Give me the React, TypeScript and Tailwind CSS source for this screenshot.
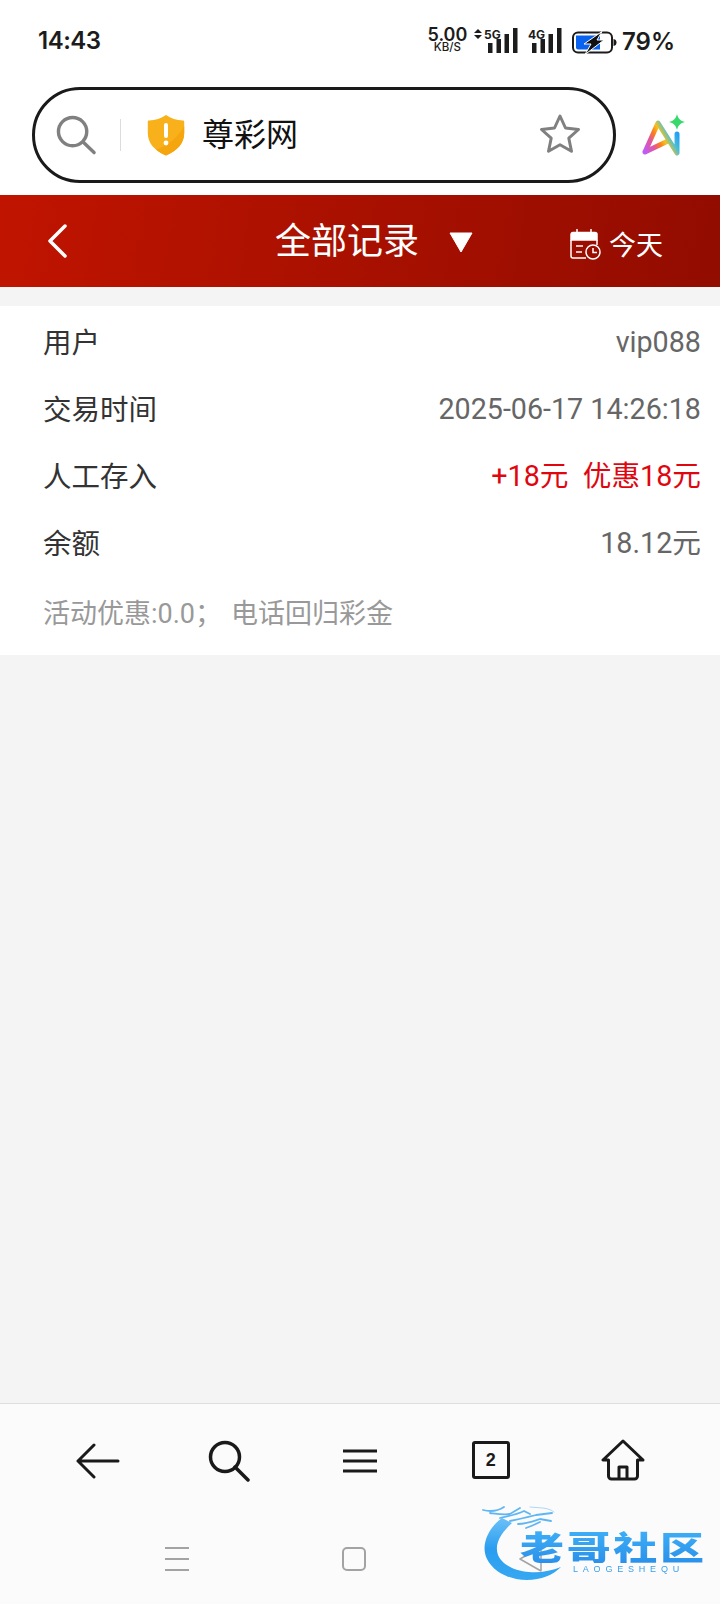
const cjk = "font-['Roboto','Noto_Sans_CJK_SC',sans-serif]";

function SignalBars({ label }: { label: string }) {
  return (
    <svg width="30" height="26" viewBox="0 0 30 26" className="overflow-visible">
      <rect x="0" y="15" width="4.500" height="10" fill="#1c1c1c" />
      <rect x="8.500" y="11" width="4.500" height="14" fill="#1c1c1c" />
      <rect x="16.500" y="6" width="4.500" height="19" fill="#1c1c1c" />
      <rect x="25" y="0" width="4.500" height="25" fill="#1c1c1c" />
      <text x="-4" y="11" fontSize="12" fontWeight="700" fontFamily="Inter, sans-serif" fill="#1c1c1c">{label}</text>
    </svg>
  );
}

function StatusBar() {
  return (
    <div className="h-[87px] flex items-start justify-between pl-[38px] pr-[45px] pt-[27px] font-['Inter',sans-serif] text-[#1c1c1c]">
      <span className="text-[24px] leading-[28px] font-semibold tracking-[-0.5px]">14:43</span>
      <div className="flex items-start">
        <div className="flex flex-col items-center w-[39px] mt-[1px]">
          <span className="text-[18px] leading-[14px] font-semibold">5.00</span>
          <span className="mt-[1px] text-[11.500px] leading-[9px] font-medium">KB/S</span>
        </div>
        <svg width="8" height="10" viewBox="0 0 8 10" className="ml-[7px] mt-[2px]">
          <path d="M4 0 8 4H0zM0 6h8L4 10z" fill="#1c1c1c" />
        </svg>
        <div className="ml-[6px] mt-[1px]"><SignalBars label="5G" /></div>
        <div className="ml-[14px] mt-[1px]"><SignalBars label="4G" /></div>
        <svg width="46" height="24" viewBox="0 0 46 24" className="ml-[10px] mt-[4px]">
          <rect x="1" y="1.500" width="39" height="20" rx="5" fill="#fff" stroke="#1c1c1c" strokeWidth="2" />
          <path d="M4 4.500h24v14H6a2 2 0 0 1-2-2z" fill="#0a63f0" />
          <path d="M41.500 8c2 .3 3 1.500 3 3.500s-1 3.200-3 3.500z" fill="#1c1c1c" />
          <path d="M30 .5 12 13h7l-6 10.500L32 9h-7l5-8.500z" fill="#111" stroke="#fff" strokeWidth="1" />
        </svg>
        <span className="ml-[4px] mt-[1px] text-[24px] leading-[28px] font-semibold">79%</span>
      </div>
    </div>
  );
}

function ShieldIcon() {
  return (
    <svg width="38" height="42" viewBox="0 0 38 42">
      <path d="M19 1c5 3.500 10.500 5.200 17 5.500.8 0 1.200.5 1.200 1.200V19c0 10-6.500 17.500-18.200 22.500C7.300 36.500.8 29 .8 19V7.700c0-.7.4-1.200 1.200-1.200C8.500 6.200 14 4.500 19 1z" fill="#f9b11b" />
      <path d="M37.200 12V19c0 10-6.500 17.500-18.200 22.500-4-1.700-7.300-3.700-10-6C22 31 31 23 37.200 12z" fill="#f5a50e" />
      <rect x="17" y="9" width="4" height="15" rx="2" fill="#fff" />
      <circle cx="19" cy="29" r="2.400" fill="#fff" />
    </svg>
  );
}

function AiLogo() {
  return (
    <svg width="44" height="44" viewBox="0 0 44 44">
      <defs>
        <linearGradient id="aiStroke" gradientUnits="userSpaceOnUse" x1="3" y1="38" x2="36" y2="20">
          <stop offset="0" stopColor="#c05cf5" />
          <stop offset="0.28" stopColor="#e2569a" />
          <stop offset="0.45" stopColor="#fb7d1c" />
          <stop offset="0.6" stopColor="#f4c21f" />
          <stop offset="0.78" stopColor="#4fc0d0" />
          <stop offset="1" stopColor="#1f9efb" />
        </linearGradient>
      </defs>
      <path d="M3 38 16 9l19 30V20M3 38l23-11" fill="none" stroke="url(#aiStroke)" strokeWidth="5" strokeLinecap="round" strokeLinejoin="round" />
      <path d="M35 0c1 4.500 3.500 7 8 8-4.500 1-7 3.500-8 8-1-4.500-3.500-7-8-8 4.500-1 7-3.500 8-8z" fill="#37d96b" />
    </svg>
  );
}

function AddressBar() {
  return (
    <div className="h-[108px] flex items-start pl-[32px]">
      <div className="w-[584px] h-[96px] rounded-full border-[3px] border-[#1a1a1a] flex items-center pl-[21px] pr-[32px]">
        <svg width="41" height="41" viewBox="0 0 42 42" fill="none" stroke="#808080" strokeWidth="3.500" strokeLinecap="round">
          <circle cx="17" cy="17" r="14.500" />
          <path d="m28 28 11 10.500" />
        </svg>
        <div className="w-px h-[32px] bg-[#dcdcdc] ml-[23px]" />
        <div className="ml-[26px]"><ShieldIcon /></div>
        <span className={`ml-[17px] text-[32px] leading-none text-[#111] ${cjk}`}>尊彩网</span>
        <svg width="42" height="42" viewBox="0 0 42 42" className="ml-auto -mt-[2px]" fill="none" stroke="#808080" strokeWidth="3" strokeLinejoin="round">
          <path d="m21 3 5.500 12 13 1.500-9.700 8.700 2.700 13L21 31.700 9.500 38.200l2.700-13-9.700-8.700 13-1.500z" />
        </svg>
      </div>
      <div className="ml-[26px] mt-[27px]"><AiLogo /></div>
    </div>
  );
}

function PageHeader() {
  return (
    <div className="h-[92px] flex items-center text-white bg-[linear-gradient(100deg,#c01400,#a81000_50%,#920c00)]">
      <svg width="20" height="34" viewBox="0 0 20 34" className="ml-[47px]" fill="none" stroke="#fff" strokeWidth="3.500" strokeLinecap="round" strokeLinejoin="round">
        <path d="M18 2 3 17l15 15" />
      </svg>
      <span className={`ml-[208px] mt-[2px] text-[36px] leading-none ${cjk}`}>全部记录</span>
      <svg width="24" height="20" viewBox="0 0 24 20" className="ml-[30px] mt-[2px]">
        <path d="M1 1h22L12 20z" fill="#fff" stroke="#fff" strokeWidth="1" strokeLinejoin="round" />
      </svg>
      <svg width="31" height="31" viewBox="0 0 31 31" className="ml-[97px] mt-[6px]" fill="none" stroke="#fff" strokeWidth="1.500">
        <path d="M1 11V5.500a2 2 0 0 1 2-2h22a2 2 0 0 1 2 2V11z" fill="#fff" />
        <path d="M7 .5v4M21 .5v4" strokeLinecap="round" />
        <path d="M1 11v16a2 2 0 0 0 2 2h13M27 11v5" />
        <path d="M6 17h7M6 23h6" />
        <circle cx="23" cy="23" r="7" />
        <path d="M23 19v4.500h4" />
      </svg>
      <span className={`ml-[8px] mt-[10px] text-[27px] leading-none ${cjk}`}>今天</span>
    </div>
  );
}

const rows = [
  { label: "用户", value: "vip088", tone: "text-[#666]" },
  { label: "交易时间", value: "2025-06-17 14:26:18", tone: "text-[#666]" },
  { label: "人工存入", value: "+18元  优惠18元", tone: "text-[#e0060f]" },
  { label: "余额", value: "18.12元", tone: "text-[#666]" },
];

function RecordCard() {
  return (
    <div className={`mt-[19px] bg-white pt-[3px] pb-[6px] pl-[43px] pr-[19px] text-[28.500px] ${cjk}`}>
      {rows.map((row) => (
        <div key={row.label} className="h-[67px] flex items-center justify-between">
          <span className="mt-[3px] text-[#333]">{row.label}</span>
          <span className={`${row.tone} text-[28.700px] whitespace-pre`}>{row.value}</span>
        </div>
      ))}
      <div className="h-[72px] pt-[2px] flex items-center text-[27px] text-[#999] whitespace-pre">
        活动优惠:0.0；<span className="ml-[9px]">电话回归彩金</span>
      </div>
    </div>
  );
}

function BrowserNav() {
  return (
    <div className="grid grid-cols-5 px-[33px] h-[112px] items-center justify-items-center pt-[1px]">
      <svg width="44" height="36" viewBox="0 0 44 36" fill="none" stroke="#1a1a1a" strokeWidth="3" strokeLinecap="round" strokeLinejoin="round">
        <path d="M42 18H2M18 2 2 18l16 16" />
      </svg>
      <svg width="42" height="42" viewBox="0 0 42 42" fill="none" stroke="#1a1a1a" strokeWidth="3.500" strokeLinecap="round">
        <circle cx="17" cy="17" r="14.500" />
        <path d="m27 27 13 13" />
      </svg>
      <svg width="34" height="24" viewBox="0 0 34 24" fill="none" stroke="#1a1a1a" strokeWidth="3">
        <path d="M0 2h34M0 12h34M0 22h34" />
      </svg>
      <div className="w-[38px] h-[38px] -mt-[2px] rounded-[3px] border-[3px] border-[#1a1a1a] flex items-center justify-center font-['Liberation_Sans',sans-serif] font-bold text-[18px] leading-none text-[#1a1a1a]">2</div>
      <svg width="44" height="42" viewBox="0 0 44 42" className="ml-[3px] -mt-[2px]" fill="none" stroke="#1a1a1a" strokeWidth="3" strokeLinejoin="round">
        <path d="M22 2 2 21h5.500v16a3 3 0 0 0 3 3h23a3 3 0 0 0 3-3V21H42z" />
        <path d="M18 40V28h8v12" />
      </svg>
    </div>
  );
}

function SystemNav() {
  return (
    <div className="grid grid-cols-3 w-[531px] ml-[88px] h-[88px] items-center justify-items-center pb-[3px]">
      <svg width="24" height="24" viewBox="0 0 24 24" fill="none" stroke="#a3a3a3" strokeWidth="2">
        <path d="M0 1h24M0 12h24M0 23h24" />
      </svg>
      <div className="w-[24px] h-[24px] rounded-[5px] border-2 border-[#a3a3a3]" />
      <svg width="24" height="26" viewBox="0 0 24 26" fill="none" stroke="#a3a3a3" strokeWidth="1.500" strokeLinejoin="round">
        <path d="M22 1 1 13l21 12z" />
      </svg>
    </div>
  );
}

// community badge that floats over the bottom-right corner
function CommunityBadge() {
  return (
    <div className="absolute left-[482px] top-[100px] w-[222px] h-[78px] blur-[0.6px]">
      <svg width="90" height="78" viewBox="0 0 90 78" className="absolute left-0 top-0 overflow-visible">
        <defs>
          <linearGradient id="dragon" x1="0" y1="0" x2="0" y2="1">
            <stop offset="0" stopColor="#6cc1f7" />
            <stop offset="0.5" stopColor="#2a9df0" />
            <stop offset="1" stopColor="#36a8f2" />
          </linearGradient>
        </defs>
        <path d="M20 14C4 26-1 43 5 55c7 14 24 21 40 21 14 0 26-5 34-13-10 4-21 6-32 5-13-1-26-6-31-17-4-11 3-22 14-32z" fill="url(#dragon)" />
        <g fill="none" stroke="#3aa5f2" strokeWidth="1.800" strokeLinecap="round" opacity="0.8">
          <path d="M1 6c8 2 15 1 21-3" />
          <path d="M8 9c8 1 14 2 20 1l10-6" />
          <path d="M18 14c8-2 16-3 24-7l6 3" />
          <path d="M28 17c10-2 18-4 26-6l16-2" />
          <path d="M36 20c8 0 16-3 22-5l11 2" />
          <path d="M44 24c6-2 10-4 14-6" />
          <path d="M48 3c8 1 18 0 24 5" strokeWidth="1" opacity="0.5" />
        </g>
      </svg>
      <div className="absolute left-[38px] top-[19px] w-[184px] flex justify-between scale-y-75 text-[44px] leading-[46px] font-black font-['Noto_Sans_CJK_SC',sans-serif] bg-[linear-gradient(180deg,#3fb0f8,#2a90ea)] bg-clip-text text-transparent">
        <span>老</span><span>哥</span><span>社</span><span>区</span>
      </div>
      <span className="absolute left-[91px] top-[60px] text-[9px] leading-[10px] tracking-[4.800px] text-[#3aa0ee] font-['Liberation_Sans',sans-serif]">LAOGESHEQU</span>
    </div>
  );
}

export default function App() {
  return (
    <div className="w-[720px] h-[1604px] flex flex-col bg-[#f4f4f4] overflow-hidden">
      <div className="bg-white">
        <StatusBar />
        <AddressBar />
      </div>
      <PageHeader />
      <RecordCard />
      <div className="flex-1" />
      <div className="relative bg-[#fbfbfb] border-t border-[#dedede]">
        <BrowserNav />
        <SystemNav />
        <CommunityBadge />
      </div>
    </div>
  );
}
